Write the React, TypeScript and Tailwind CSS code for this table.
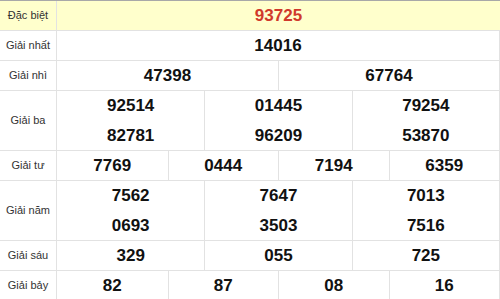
import React from "react";

type Row = { label: string; cols: number; values: string[][]; tall?: boolean; special?: boolean };

const rows: Row[] = [
  { label: "Đặc biệt", cols: 1, values: [["93725"]], special: true },
  { label: "Giải nhất", cols: 1, values: [["14016"]] },
  { label: "Giải nhì", cols: 2, values: [["47398"], ["67764"]] },
  { label: "Giải ba", cols: 3, values: [["92514", "82781"], ["01445", "96209"], ["79254", "53870"]], tall: true },
  { label: "Giải tư", cols: 4, values: [["7769"], ["0444"], ["7194"], ["6359"]] },
  { label: "Giải năm", cols: 3, values: [["7562", "0693"], ["7647", "3503"], ["7013", "7516"]], tall: true },
  { label: "Giải sáu", cols: 3, values: [["329"], ["055"], ["725"]] },
  { label: "Giải bảy", cols: 4, values: [["82"], ["87"], ["08"], ["16"]] },
];

const gridCls: Record<number, string> = {
  1: "grid-cols-1",
  2: "grid-cols-2",
  3: "grid-cols-3",
  4: "grid-cols-4",
};

export default function App() {
  return (
    <div
      className="w-[500px] bg-white border-t border-[#a8a8a8]"
      style={{ fontFamily: '"Liberation Sans", Arial, sans-serif' }}
    >
      {rows.map((r) => (
        <div
          key={r.label}
          className={`flex border-b border-[#e2e2e2] ${r.tall ? "h-[60px]" : "h-[30px]"} ${
            r.special ? "bg-[#ffffcc]" : "border-r"
          }`}
        >
          <div className="w-[57px] shrink-0 border-r border-[#e2e2e2] flex items-center justify-center text-[11px] text-[#333]">
            {r.label}
          </div>
          <div className={`flex-1 grid ${gridCls[r.cols]}`}>
            {r.values.map((cell, i) => (
              <div
                key={i}
                className={`flex flex-col ${i > 0 ? "border-l border-[#e2e2e2]" : ""}`}
              >
                {cell.map((v) => (
                  <div
                    key={v}
                    className={`flex-1 flex items-center justify-center text-[17px] font-bold ${
                      r.special ? "text-[#d0392b]" : "text-[#111]"
                    }`}
                  >
                    {v}
                  </div>
                ))}
              </div>
            ))}
          </div>
        </div>
      ))}
    </div>
  );
}
